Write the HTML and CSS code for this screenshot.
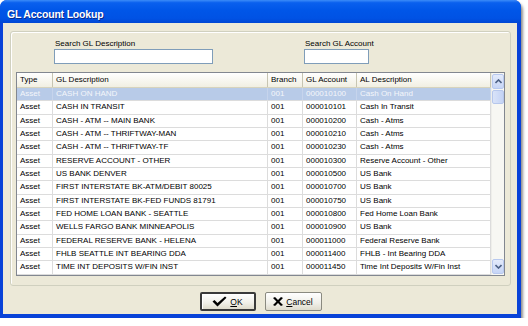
FILE: index.html
```html
<!DOCTYPE html>
<html>
    <head>
        <meta charset="utf-8">
        <title>GL Account Lookup</title>
        <link rel="stylesheet" href="styles.css">
    </head>
    <body>
        <div class="window">
            <div class="titlebar">
                <span class="title">GL Account Lookup</span>
            </div>
            <div class="client">
                <div class="group">
                    <div class="search">
                        <div class="field desc">
                            <span>Search GL Description</span>
                            <div class="edit"></div>
                        </div>
                        <div class="field acct">
                            <span>Search GL Account</span>
                            <div class="edit"></div>
                        </div>
                    </div>
                    <div class="list">
                        <div class="grid">
                            <div class="row head">
                                <div>Type</div><div>GL Description</div><div>Branch</div><div>GL Account</div><div>AL Description</div>
                            </div>
                            <div class="row selected">
                                <div>Asset</div><div>CASH ON HAND</div><div>001</div><div>000010100</div><div>Cash On Hand</div>
                            </div>
                            <div class="row">
                                <div>Asset</div><div>CASH IN TRANSIT</div><div>001</div><div>000010101</div><div>Cash In Transit</div>
                            </div>
                            <div class="row">
                                <div>Asset</div><div>CASH - ATM -- MAIN BANK</div><div>001</div><div>000010200</div><div>Cash - Atms</div>
                            </div>
                            <div class="row">
                                <div>Asset</div><div>CASH - ATM -- THRIFTWAY-MAN</div><div>001</div><div>000010210</div><div>Cash - Atms</div>
                            </div>
                            <div class="row">
                                <div>Asset</div><div>CASH - ATM -- THRIFTWAY-TF</div><div>001</div><div>000010230</div><div>Cash - Atms</div>
                            </div>
                            <div class="row">
                                <div>Asset</div><div>RESERVE ACCOUNT - OTHER</div><div>001</div><div>000010300</div><div>Reserve Account - Other</div>
                            </div>
                            <div class="row">
                                <div>Asset</div><div>US BANK DENVER</div><div>001</div><div>000010500</div><div>US Bank</div>
                            </div>
                            <div class="row">
                                <div>Asset</div><div>FIRST INTERSTATE BK-ATM/DEBIT 80025</div><div>001</div><div>000010700</div><div>US Bank</div>
                            </div>
                            <div class="row">
                                <div>Asset</div><div>FIRST INTERSTATE BK-FED FUNDS 81791</div><div>001</div><div>000010750</div><div>US Bank</div>
                            </div>
                            <div class="row">
                                <div>Asset</div><div>FED HOME LOAN BANK - SEATTLE</div><div>001</div><div>000010800</div><div>Fed Home Loan Bank</div>
                            </div>
                            <div class="row">
                                <div>Asset</div><div>WELLS FARGO BANK MINNEAPOLIS</div><div>001</div><div>000010900</div><div>US Bank</div>
                            </div>
                            <div class="row">
                                <div>Asset</div><div>FEDERAL RESERVE BANK - HELENA</div><div>001</div><div>000011000</div><div>Federal Reserve Bank</div>
                            </div>
                            <div class="row">
                                <div>Asset</div><div>FHLB SEATTLE INT BEARING DDA</div><div>001</div><div>000011400</div><div>FHLB - Int Bearing DDA</div>
                            </div>
                            <div class="row">
                                <div>Asset</div><div>TIME INT DEPOSITS W/FIN INST</div><div>001</div><div>000011450</div><div>Time Int Deposits W/Fin Inst</div>
                            </div>
                        </div>
                        <div class="scrollbar">
                            <div class="sbtn"><svg width="7" height="5" viewBox="0 0 7 5"><path d="M0.5 4 L3.5 1 L6.5 4" fill="none" stroke="#4d6185" stroke-width="1.6"/></svg></div>
                            <div class="thumb"></div>
                            <div class="track"></div>
                            <div class="sbtn"><svg width="7" height="5" viewBox="0 0 7 5"><path d="M0.5 1 L3.5 4 L6.5 1" fill="none" stroke="#4d6185" stroke-width="1.6"/></svg></div>
                        </div>
                    </div>
                </div>
                <div class="buttons">
                    <div class="btn default">
                        <svg width="15" height="11" viewBox="0 0 15 11"><path d="M0.5 5.5 L2.5 4 L5.5 7 L13 0.5 L14.5 1.8 L5.5 10.5 Z" fill="#000"/></svg>
                        <span><u>O</u>K</span>
                    </div>
                    <div class="btn">
                        <svg width="10" height="9" viewBox="0 0 10 9"><path d="M0 1 L2 0 L5 3 L8 0 L10 1 L6.5 4.5 L10 8 L8 9 L5 6 L2 9 L0 8 L3.5 4.5 Z" fill="#000"/></svg>
                        <span><u>C</u>ancel</span>
                    </div>
                </div>
            </div>
        </div>
    </body>
</html>
```

FILE: styles.css
```css
body{
    margin: 0;
    background-color: #ffffff;
    font-family: "Liberation Sans", Arial, sans-serif;
    font-size: 8px;
    color: #000000;
}
.window{
    width: 521px;
    height: 318px;
    display: flex;
    flex-direction: column;
    background-color: #0842d8;
    border-radius: 7px 7px 0 0;
    box-shadow: 2px 3px 3px rgba(0,0,0,0.45);
}
.titlebar{
    height: 23px;
    flex: none;
    display: flex;
    align-items: center;
    padding-left: 7px;
    border-radius: 7px 7px 0 0;
    background: linear-gradient(#3c8cf8 0%, #0a60ee 12%, #0056e8 45%, #0052e4 80%, #0046d4 100%);
}
.title{
    color: #ffffff;
    font-weight: bold;
    font-size: 10.5px;
    letter-spacing: -0.2px;
    text-shadow: 1px 1px 0 #0a2a8a;
    padding-top: 4px;
}
.client{
    flex: 1;
    margin: 0 4px 4px 3px;
    background-color: #ece9d8;
    display: flex;
    flex-direction: column;
    padding: 8px 6px 3px 7px;
}
.group{
    flex: 1;
    border: 1px solid #d0d0bf;
    border-radius: 3px;
    box-shadow: inset 1px 1px 0 #ffffff;
    padding: 6px 5px 9px 5px;
    display: flex;
    flex-direction: column;
}
.search{
    display: flex;
    padding-left: 38px;
    gap: 91px;
    height: 34px;
}
.field span{
    display: block;
    height: 11px;
    line-height: 11px;
    padding-left: 1px;
}
.field.desc .edit{
    width: 159px;
}
.field.acct .edit{
    width: 65px;
}
.edit{
    height: 15px;
    box-sizing: border-box;
    background-color: #ffffff;
    border: 1px solid #7f9db9;
}
.list{
    flex: 1;
    display: flex;
    border: 1px solid #828790;
    background-color: #ffffff;
}
.grid{
    flex: 1;
}
.row{
    display: grid;
    grid-template-columns: 36px 215px 35px 54px 1fr;
    height: 13.33px;
    line-height: 12.33px;
    box-sizing: border-box;
    border-bottom: 1px solid #dcdcdc;
    white-space: nowrap;
}
.row div{
    border-right: 1px solid #dcdcdc;
    padding-left: 3px;
    overflow: hidden;
}
.row.head{
    height: 15px;
    line-height: 14px;
    background: linear-gradient(#ffffff, #f1efe2);
    border-bottom: 1px solid #d6d3bd;
}
.row.head div{
    border-right: 1px solid #c7c5b2;
}
.row.selected{
    background-color: #b8cbe8;
    color: #f4f6fa;
}
.row.selected div{
    border-right-color: #c6d4ec;
}
.scrollbar{
    width: 12px;
    flex: none;
    display: flex;
    flex-direction: column;
    background-color: #f7f7f3;
    border-left: 1px solid #eeeeea;
}
.sbtn{
    height: 13px;
    margin: 1px 0;
    display: flex;
    align-items: center;
    justify-content: center;
    background: linear-gradient(#e4ebfb, #c6d5f6);
    border: 1px solid #b8c9ef;
    border-radius: 2px;
}
.thumb{
    height: 12px;
    background: linear-gradient(90deg, #d9e3f8, #c4d3f5);
    border: 1px solid #b6c7ec;
    border-radius: 2px;
}
.track{
    flex: 1;
}
.buttons{
    display: flex;
    justify-content: center;
    gap: 9px;
    padding-top: 6px;
}
.btn{
    width: 57px;
    height: 19px;
    box-sizing: border-box;
    display: flex;
    align-items: center;
    justify-content: center;
    gap: 3px;
    border: 1px solid #8a8a80;
    border-radius: 2px;
    background: linear-gradient(#ffffff, #f0efe8 60%, #dedbcc);
}
.btn.default{
    width: 56px;
    border: 2px solid #3a3a3a;
    box-shadow: inset 1px 1px 0 #ffffff;
}
.btn span{
    font-size: 8.5px;
}
```
